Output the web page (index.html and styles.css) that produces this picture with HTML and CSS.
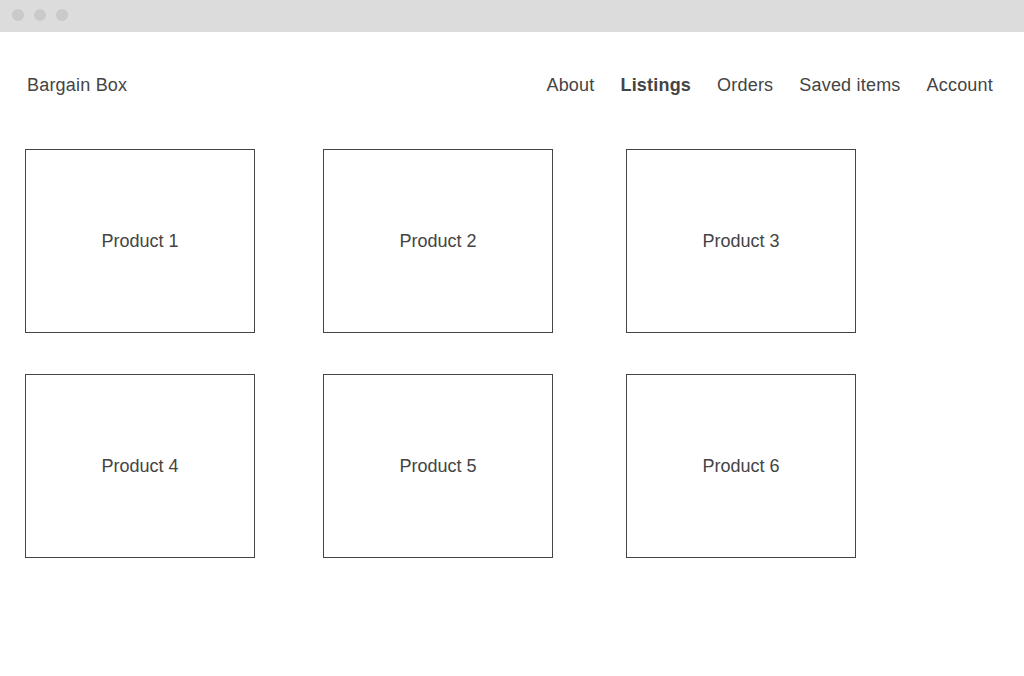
FILE: index.html
```html
<!DOCTYPE html>
<html lang="en">
<head>
<meta charset="utf-8">
<title>Bargain Box</title>
<link rel="stylesheet" href="styles.css">
</head>
<body>
<div class="titlebar">
  <span class="dot"></span><span class="dot"></span><span class="dot"></span>
</div>
<header class="header">
  <div class="brand">Bargain Box</div>
  <nav class="nav">
    <a class="nav-link">About</a>
    <a class="nav-link active">Listings</a>
    <a class="nav-link">Orders</a>
    <a class="nav-link">Saved items</a>
    <a class="nav-link">Account</a>
  </nav>
</header>
<main class="grid">
  <div class="card">Product 1</div>
  <div class="card">Product 2</div>
  <div class="card">Product 3</div>
  <div class="card">Product 4</div>
  <div class="card">Product 5</div>
  <div class="card">Product 6</div>
</main>
</body>
</html>
```
FILE: styles.css
```css
html, body {
  margin: 0;
  padding: 0;
  background: #ffffff;
}
body {
  font-family: "Liberation Sans", Arial, sans-serif;
  font-size: 18px;
  color: #444444;
  width: 1024px;
  height: 676px;
  overflow: hidden;
}
.titlebar {
  height: 32px;
  background: #dcdcdc;
  display: flex;
  align-items: center;
  gap: 10px;
  padding-left: 12px;
  padding-bottom: 2px;
  box-sizing: border-box;
}
.dot {
  width: 12px;
  height: 12px;
  border-radius: 50%;
  background: #cacaca;
}
.header {
  display: flex;
  justify-content: space-between;
  align-items: center;
  padding: 43px 31px 0 27px;
  line-height: 20px;
  letter-spacing: 0.2px;
}
.nav {
  display: flex;
  gap: 26px;
}
.nav-link {
  color: #444444;
  text-decoration: none;
}
.nav-link.active {
  font-weight: bold;
}
.grid {
  display: grid;
  grid-template-columns: 298px 303px 230px;
  row-gap: 41px;
  margin: 54px 0 0 25px;
}
.card {
  width: 230px;
  height: 184px;
  box-sizing: border-box;
  border: 1px solid #454545;
  display: flex;
  align-items: center;
  justify-content: center;
  line-height: 20px;
}
```
